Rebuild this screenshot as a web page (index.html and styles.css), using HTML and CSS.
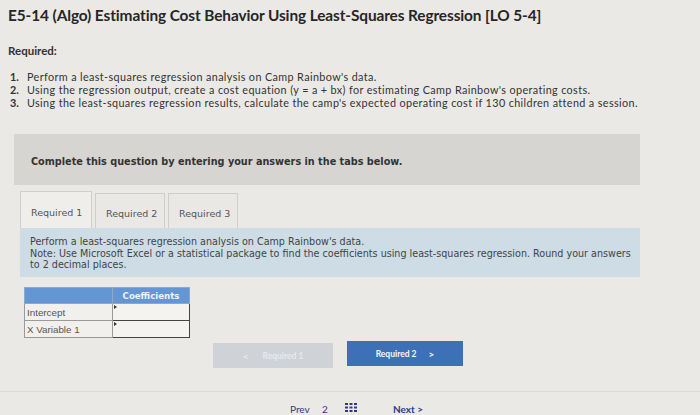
FILE: index.html
```html
<!DOCTYPE html>
<html>
<head>
<meta charset="utf-8">
<link rel="stylesheet" href="styles.css">
</head>
<body>
<div class="page">
  <h1 class="title">E5-14 (Algo) Estimating Cost Behavior Using Least-Squares Regression [LO 5-4]</h1>
  <p class="req-label">Required:</p>
  <ol class="req-list">
    <li><span class="num">1.</span>Perform a least-squares regression analysis on Camp Rainbow's data.</li>
    <li><span class="num">2.</span>Using the regression output, create a cost equation (y = a + bx) for estimating Camp Rainbow's operating costs.</li>
    <li><span class="num">3.</span>Using the least-squares regression results, calculate the camp's expected operating cost if 130 children attend a session.</li>
  </ol>

  <div class="instruction">Complete this question by entering your answers in the tabs below.</div>

  <div class="tabs">
    <div class="tab active">Required 1</div>
    <div class="tab">Required 2</div>
    <div class="tab">Required 3</div>
  </div>
  <div class="panel">
    <div>Perform a least-squares regression analysis on Camp Rainbow's data.</div>
    <div>Note: Use Microsoft Excel or a statistical package to find the coefficients using least-squares regression. Round your answers<br>to 2 decimal places.</div>
  </div>

  <table class="coef">
    <thead>
      <tr><th class="c1"></th><th class="c2">Coefficients</th></tr>
    </thead>
    <tbody>
      <tr><td class="c1">Intercept</td><td class="c2 input"></td></tr>
      <tr><td class="c1">X Variable 1</td><td class="c2 input"></td></tr>
    </tbody>
  </table>

  <div class="nav">
    <div class="btn prev"><span class="chev">&lt;</span>Required 1</div>
    <div class="btn next">Required 2<span class="chev">&gt;</span></div>
  </div>

  <div class="footer">
    <span class="f-prev">Prev</span>
    <span class="f-page">2</span>
    <svg class="grid-icon" width="12" height="9" viewBox="0 0 12 9">
      <rect x="0" y="0" width="3" height="2" fill="#2d3a8c"/>
      <rect x="4.5" y="0" width="3" height="2" fill="#2d3a8c"/>
      <rect x="9" y="0" width="3" height="2" fill="#2d3a8c"/>
      <rect x="0" y="3.5" width="3" height="2" fill="#2d3a8c"/>
      <rect x="4.5" y="3.5" width="3" height="2" fill="#2d3a8c"/>
      <rect x="9" y="3.5" width="3" height="2" fill="#2d3a8c"/>
      <rect x="0" y="7" width="3" height="2" fill="#2d3a8c"/>
      <rect x="4.5" y="7" width="3" height="2" fill="#2d3a8c"/>
      <rect x="9" y="7" width="3" height="2" fill="#2d3a8c"/>
    </svg>
    <span class="f-next">Next <span class="chev">&gt;</span></span>
  </div>
</div>
</body>
</html>
```
FILE: styles.css
```css
html, body {
  margin: 0;
  padding: 0;
  background: #ebe9e5;
}
.page {
  width: 700px;
  height: 415px;
  overflow: hidden;
  position: relative;
  font-family: "Lato", "Liberation Sans", sans-serif;
  color: #2b2b2b;
}
.title {
  margin: 0;
  padding: 6px 0 0 8px;
  font-size: 15.4px;
  font-weight: 700;
  line-height: 18px;
  color: #262626;
  letter-spacing: -0.1px;
}
.req-label {
  margin: 20px 0 0 8px;
  font-size: 11.5px;
  font-weight: 700;
  line-height: 14px;
  color: #333;
}
.req-list {
  list-style: none;
  margin: 12px 0 0 0;
  padding: 0 0 0 10px;
  font-size: 10.8px;
  line-height: 13px;
  letter-spacing: 0.38px;
  color: #333;
}
.req-list li {
  display: flex;
  white-space: nowrap;
}
.num {
  font-weight: 700;
  width: 17px;
  flex: none;
  letter-spacing: 0;
}
.instruction {
  margin: 25px 0 0 14px;
  width: 609px;
  padding: 4px 0 0 17px;
  height: 47px;
  line-height: 47px;
  background: #d6d5d2;
  font-family: "DejaVu Sans", sans-serif;
  font-weight: 700;
  font-size: 9.7px;
  color: #333;
}
.tabs {
  display: flex;
  gap: 3px;
  margin: 6px 0 0 20px;
  height: 37px;
  align-items: flex-end;
}
.tab {
  width: 70px;
  height: 35px;
  box-sizing: border-box;
  border: 1px solid #cfcecb;
  border-bottom: none;
  background: #e9e8e5;
  font-family: "DejaVu Sans", sans-serif;
  font-size: 9.5px;
  color: #555;
  display: flex;
  align-items: center;
  padding-left: 10px;
  padding-top: 4px;
}
.tab.active {
  height: 37px;
  width: 72px;
  background: #efeeeb;
}
.panel {
  margin: 0 0 0 20px;
  width: 620px;
  box-sizing: border-box;
  padding: 8px 3px 6px 10px;
  background: #cddce5;
  font-family: "DejaVu Sans", sans-serif;
  font-size: 9.6px;
  line-height: 11.5px;
  color: #444;
  height: 49px;
}
.coef {
  margin: 10px 0 0 24px;
  border-collapse: collapse;
  font-family: "Liberation Sans", sans-serif;
  font-size: 9.8px;
}
.coef th {
  background: #6396d2;
  height: 15px;
  padding: 0;
  border: 1px solid #8fa9c4;
  color: #eef3fa;
  font-weight: 700;
  font-family: "DejaVu Sans", sans-serif;
  font-size: 8.6px;
  text-align: center;
}
.coef .c1 {
  width: 85px;
}
.coef .c2 {
  width: 74px;
}
.coef td {
  height: 16px;
  padding: 0 0 0 2px;
  border: 1px solid #9a9a9a;
  background: #f1f0ed;
  color: #555;
}
.coef td.input {
  border: 1.5px solid #444;
  background: #f4f3f0;
  position: relative;
}
.coef td.input::before {
  content: "";
  position: absolute;
  left: 1px;
  top: 1px;
  border-left: 3px solid #333;
  border-top: 2px solid transparent;
  border-bottom: 2px solid transparent;
}
.nav {
  display: flex;
  gap: 14px;
  margin: 3px 0 0 213px;
  align-items: flex-start;
}
.btn {
  width: 120px;
  height: 25px;
  box-sizing: border-box;
  display: flex;
  align-items: center;
  justify-content: center;
  font-family: "Lato", "Liberation Sans", sans-serif;
  font-weight: 700;
  font-size: 8.5px;
}
.btn.prev {
  background: #cfd3d8;
  color: #e6e9ee;
  margin-top: 2px;
}
.btn.prev .chev {
  margin-right: 14px;
  font-size: 10px;
}
.btn.next {
  width: 116px;
  background: #3e70b8;
  color: #f5f8fc;
}
.btn.next .chev {
  margin-left: 12px;
  font-size: 10px;
}
.footer {
  position: absolute;
  left: 0;
  top: 391px;
  width: 700px;
  height: 24px;
  border-top: 1px solid #dddbd7;
  font-family: "Lato", sans-serif;
  font-size: 10px;
  line-height: 12px;
  color: #2d3a8c;
}
.f-prev {
  position: absolute;
  left: 290px;
  top: 11px;
}
.f-page {
  position: absolute;
  left: 322px;
  top: 11px;
}
.grid-icon {
  position: absolute;
  left: 345px;
  top: 11px;
}
.f-next {
  position: absolute;
  left: 393px;
  top: 11px;
  font-weight: 700;
}
```
